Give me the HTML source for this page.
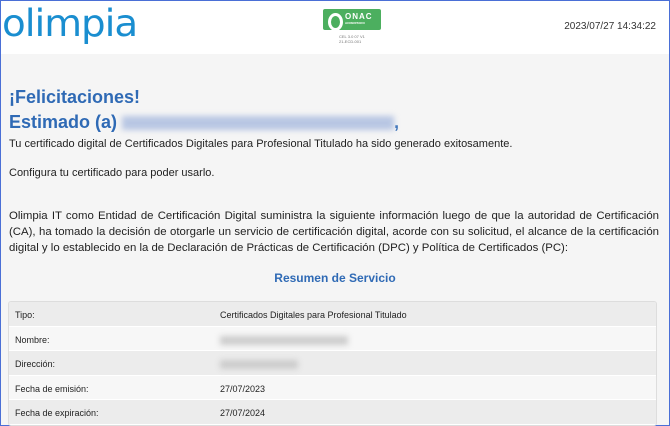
<!DOCTYPE html>
<html><head><meta charset="utf-8"><style>
*{margin:0;padding:0;box-sizing:border-box}
html,body{width:670px;height:426px;overflow:hidden}
body{font-family:"Liberation Sans",Arial,sans-serif;background:#f5f5f5;border:1px solid #4a6fd6;position:relative;color:#222}
.hdr{position:absolute;left:0;top:0;width:668px;height:53px;background:#fff}
.logo{position:absolute;left:1px;top:1px;font-size:37px;color:#1a8ed0;letter-spacing:-1px;font-family:"DejaVu Sans",sans-serif;transform:scaleX(1.05);transform-origin:left}
.onac{position:absolute;left:322px;top:8px;width:58px;height:21px;background:#4caf5f;border-radius:2px;color:#fff;font-size:8px;font-weight:bold;padding:3px 0 0 22px;letter-spacing:1px}
.onac:before{content:"";position:absolute;left:5px;top:4px;width:9px;height:12px;border-radius:50%;border:3px solid #fff}
.onac small{display:block;font-size:3px;letter-spacing:0}
.tiny{position:absolute;left:338px;top:33px;font-size:4px;color:#777;line-height:5px}
.date{position:absolute;right:13px;top:20px;font-size:10px;color:#333}
.t{position:absolute;color:#2f6ab5;font-weight:bold;font-size:18px}
.blur{display:inline-block;background:#b8c6e3;filter:blur(3px);vertical-align:middle}
.p{position:absolute;font-size:11px;color:#222}
.para{position:absolute;left:8px;top:207px;width:650px;font-size:11.4px;line-height:16px;text-align:justify}
.tbl{position:absolute;left:7px;top:300px;width:649px;border:1px solid #ddd;border-radius:3px;overflow:hidden}
.r{height:24.6px;font-size:9px;position:relative;border-bottom:1px solid #fff}
.r:nth-child(odd){background:#ececec}.r:nth-child(even){background:#f7f7f7}
.r span{position:absolute;top:8px;left:6px}.r b{position:absolute;top:8px;left:211px;font-weight:normal}
</style></head><body>
<div class="hdr">
<div class="logo">olimpia</div>
<div class="onac">ONAC<small>ACREDITADO</small></div>
<div class="tiny">CEL 3.0 07 V1<br>21-ECD-001</div>
<div class="date">2023/07/27 14:34:22</div>
</div>
<div class="t" style="left:8px;top:86px">¡Felicitaciones!</div>
<div class="t" style="left:8px;top:111px">Estimado (a) <span class="blur" style="width:272px;height:14px"></span>,</div>
<div class="p" style="left:8px;top:137px">Tu certificado digital de Certificados Digitales para Profesional Titulado ha sido generado exitosamente.</div>
<div class="p" style="left:8px;top:166px">Configura tu certificado para poder usarlo.</div>
<div class="para">Olimpia IT como Entidad de Certificación Digital suministra la siguiente información luego de que la autoridad de Certificación (CA), ha tomado la decisión de otorgarle un servicio de certificación digital, acorde con su solicitud, el alcance de la certificación digital y lo establecido en la de Declaración de Prácticas de Certificación (DPC) y Política de Certificados (PC):</div>
<div style="position:absolute;left:0;width:668px;top:270px;text-align:center;color:#2f6ab5;font-weight:bold;font-size:12px">Resumen de Servicio</div>
<div class="tbl">
<div class="r"><span>Tipo:</span><b>Certificados Digitales para Profesional Titulado</b></div>
<div class="r"><span>Nombre:</span><b><i class="blur" style="width:128px;height:9px;background:#ccc"></i></b></div>
<div class="r"><span>Dirección:</span><b><i class="blur" style="width:78px;height:9px;background:#ccc"></i></b></div>
<div class="r"><span>Fecha de emisión:</span><b>27/07/2023</b></div>
<div class="r"><span>Fecha de expiración:</span><b>27/07/2024</b></div>
</div>
</body></html>
